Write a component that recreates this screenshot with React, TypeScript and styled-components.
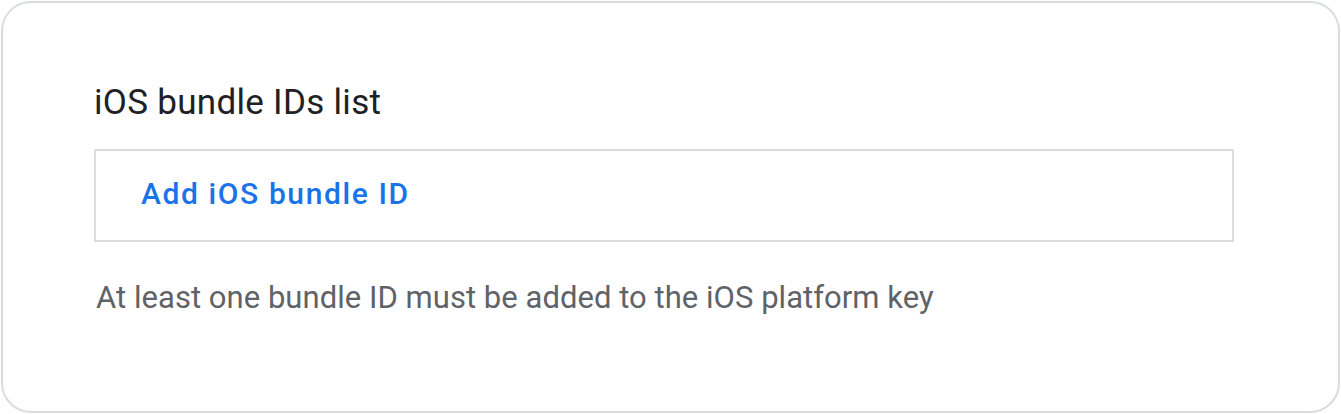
import React from "react";
import styled, { createGlobalStyle } from "styled-components";

const GlobalStyle = createGlobalStyle`
  html, body {
    margin: 0;
    padding: 0;
    background: #ffffff;
  }
  body {
    font-family: Roboto, "Liberation Sans", Arial, sans-serif;
  }
`;

const Card = styled.section`
  box-sizing: border-box;
  width: 1339px;
  height: 412px;
  margin: 1px 0 0 1px;
  border: 2px solid #dadce0;
  border-radius: 30px;
  padding: 79px 104px 0 91px;
  display: flex;
  flex-direction: column;
`;

const Title = styled.h2`
  margin: 0;
  font-size: 35px;
  font-weight: 400;
  line-height: 42px;
  letter-spacing: 0.3px;
  color: #202124;
`;

const ListBox = styled.div`
  box-sizing: border-box;
  margin-top: 25px;
  height: 93px;
  border: 2px solid #dadce0;
  display: flex;
  align-items: center;
  padding: 0 0 4px 45px;
`;

const AddButton = styled.button`
  border: none;
  background: none;
  padding: 0;
  font-family: Roboto, "Liberation Sans", Arial, sans-serif;
  font-size: 30px;
  font-weight: 500;
  letter-spacing: 1.6px;
  color: #1a73e8;
  cursor: pointer;
`;

const Hint = styled.p`
  margin: 38px 0 0 2px;
  font-size: 31px;
  line-height: 36px;
  letter-spacing: 0.04px;
  color: #5f6368;
`;

export default function App() {
  return (
    <>
      <GlobalStyle />
      <Card>
        <Title>iOS bundle IDs list</Title>
        <ListBox>
          <AddButton>Add iOS bundle ID</AddButton>
        </ListBox>
        <Hint>At least one bundle ID must be added to the iOS platform key</Hint>
      </Card>
    </>
  );
}
